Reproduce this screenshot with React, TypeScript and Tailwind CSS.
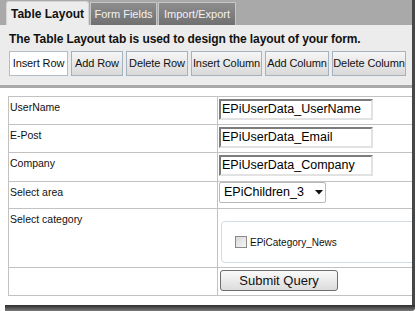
import React from "react";

const font = { fontFamily: '"Liberation Sans", Arial, sans-serif' };

function ToolButton({ label, w, active }: { label: string; w: string; active?: boolean }) {
  return (
    <div
      className={`${w} h-[25px] flex items-center justify-center text-[11px] text-[#111] whitespace-nowrap tracking-[-0.1px] border ${
        active
          ? "bg-white border-[#b4bcc4]"
          : "bg-gradient-to-b from-[#f6f6f6] to-[#d9d9d9] border-[#a6b2be]"
      }`}
    >
      {label}
    </div>
  );
}

function Row({ h, label, children, labelPad = "pt-[4px]" }: { h: string; label?: string; children?: React.ReactNode; labelPad?: string }) {
  return (
    <div className={`flex ${h} border-b border-[#c2c2c2]`}>
      <div className={`w-[209px] shrink-0 border-r border-[#c2c2c2] pl-[1px] ${labelPad} text-[10.5px] leading-[13px] text-[#111]`}>
        {label}
      </div>
      <div className="flex-1 min-w-0">{children}</div>
    </div>
  );
}

function TextInput({ value }: { value: string }) {
  return (
    <div className="ml-[1px] mt-[2px] w-[154px] h-[21px] bg-white border-[2px] border-t-[#7c7c7c] border-l-[#7c7c7c] border-b-[#e2e2e2] border-r-[#e2e2e2] flex items-center pl-[1px] text-[12.5px] text-black whitespace-nowrap">
      {value}
    </div>
  );
}

export default function App() {
  return (
    <div className="w-[419px] h-[311px] bg-white overflow-hidden" style={font}>
      <div className="w-[415px] h-[305px] border-r-[3px] border-[#474747] flex flex-col overflow-hidden">
        {/* Tab bar */}
        <div className="h-[25px] shrink-0 bg-[#a9a9a9] flex items-end pl-[6px] gap-[1px]">
          <div className="w-[83px] h-[24px] bg-[#ececec] rounded-t-[3px] border border-b-0 border-[#d6d6d6] flex items-center justify-center text-[12px] font-bold text-[#111]">
            Table Layout
          </div>
          <div className="w-[67px] h-[23px] bg-gradient-to-b from-[#8e8e8e] to-[#707070] border border-b-0 border-[#c6c6c6] flex items-center justify-center text-[11px] text-[#f2f2f2] whitespace-nowrap">
            Form Fields
          </div>
          <div className="w-[78px] h-[23px] bg-gradient-to-b from-[#8e8e8e] to-[#707070] border border-b-0 border-[#c6c6c6] flex items-center justify-center text-[11px] text-[#f2f2f2] whitespace-nowrap">
            Import/Export
          </div>
        </div>
        {/* Panel */}
        <div className="h-[60px] shrink-0 bg-[#ececec] pl-[9px] pt-[7px]">
          <div className="text-[12px] leading-[14px] font-bold tracking-[-0.1px] text-[#111] whitespace-nowrap">
            The Table Layout tab is used to design the layout of your form.
          </div>
          <div className="flex gap-[3px] mt-[5px]">
            <ToolButton label="Insert Row" w="w-[59px]" active />
            <ToolButton label="Add Row" w="w-[52px]" />
            <ToolButton label="Delete Row" w="w-[62px]" />
            <ToolButton label="Insert Column" w="w-[71px]" />
            <ToolButton label="Add Column" w="w-[64px]" />
            <ToolButton label="Delete Column" w="w-[74px]" />
          </div>
        </div>
        <div className="h-[3px] shrink-0 bg-[#a9a9a9]" />
        {/* Form table */}
        <div className="pt-[8px] pl-[8px] flex-1">
          <div className="border-l border-t border-[#c2c2c2]">
            <Row h="h-[28px]" label="UserName">
              <TextInput value="EPiUserData_UserName" />
            </Row>
            <Row h="h-[28px]" label="E-Post">
              <TextInput value="EPiUserData_Email" />
            </Row>
            <Row h="h-[29px]" label="Company">
              <TextInput value="EPiUserData_Company" />
            </Row>
            <Row h="h-[27px]" label="Select area">
              <div className="ml-[1px] w-[107px] h-[21px] bg-white border border-[#b9b9b9] rounded-[2px] flex items-center pl-[4px] text-[12.5px] text-black whitespace-nowrap">
                <span>EPiChildren_3</span>
                <svg className="ml-[11px]" width="8" height="5" viewBox="0 0 8 5">
                  <path d="M0 0 L8 0 L4 4.5 Z" fill="#111" />
                </svg>
              </div>
            </Row>
            <Row h="h-[59px]" label="Select category">
              <div className="ml-[3px] mt-[12px] w-[220px] h-[42px] border border-[#d3dbe3] rounded-[4px] flex items-center pl-[13px]">
                <div className="w-[12px] h-[12px] border border-[#8a8a8a] bg-gradient-to-br from-[#d8d8d8] to-[#f6f6f6]" />
                <span className="ml-[3px] text-[10px] text-[#111]">EPiCategory_News</span>
              </div>
            </Row>
            <Row h="h-[28px]">
              <div className="ml-[2px] mt-[2px] w-[118px] h-[21px] border border-[#6e6e6e] rounded-[3px] bg-gradient-to-b from-[#fafafa] to-[#dcdcdc] flex items-center justify-center text-[13px] text-[#111]">
                Submit Query
              </div>
            </Row>
          </div>
        </div>
      </div>
      <div className="ml-[5px] w-[410px] h-[6px] bg-gradient-to-b from-[#2e2e2e] to-[#7a7a7a] rounded-br-[3px]" />
    </div>
  );
}
